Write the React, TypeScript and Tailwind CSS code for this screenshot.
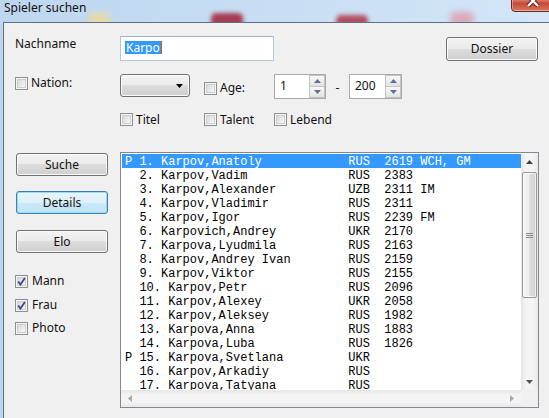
import React from "react";

function Check({ checked = false }: { checked?: boolean }) {
  return (
    <span className="relative flex w-[13px] h-[13px] shrink-0 border border-[#8e8f8f] bg-[#f6f6f6] p-[1px]">
      <span className="flex-1 border border-[#cdcdcd] bg-[linear-gradient(135deg,#d8d8d8,#f8f8f8)]" />
      {checked && (
        <svg className="absolute left-[0px] top-[0px]" width="11" height="11" viewBox="0 0 11 11">
          <path d="M2.3 5.6 L4.4 8.6 L8.9 2" fill="none" stroke="#3a4d8a" strokeWidth="1.8" />
        </svg>
      )}
    </span>
  );
}

function CB({ label, checked, className }: { label: string; checked?: boolean; className: string }) {
  return (
    <div className={className}>
      <Check checked={checked} />
      <span>{label}</span>
    </div>
  );
}

function Btn({ children, focused, className }: { children: React.ReactNode; focused?: boolean; className: string }) {
  return (
    <div className={className}>
      <div
        className={
          focused
            ? "w-full h-full rounded-[3px] border border-[#3c7fb1] bg-[linear-gradient(#e9f5fc_0%,#dff1fb_50%,#cbe9f8_50%,#c0e3f5_100%)] shadow-[inset_0_0_0_1px_#98dcf7] flex items-center justify-center"
            : "w-full h-full rounded-[3px] border border-[#707070] bg-[linear-gradient(#f2f2f2_0%,#ebebeb_50%,#dddddd_50%,#cfcfcf_100%)] shadow-[inset_0_0_0_1px_rgba(255,255,255,0.85)] flex items-center justify-center"
        }
      >
        {children}
      </div>
    </div>
  );
}

function Spinner({ value, className }: { value: string; className: string }) {
  return (
    <div className={className}>
      <div className="w-full h-full border border-[#a9a9a9] bg-white flex">
        <div className="flex-1 pl-[5px] pt-[3px] leading-[16px]">{value}</div>
        <div className="w-[16px] flex flex-col">
          <div className="flex-1 border border-[#c4c4c4] bg-[linear-gradient(#f7f7f7,#e3e3e3)] flex items-center justify-center">
            <svg width="7" height="4" viewBox="0 0 7 4">
              <path d="M0 4 L3.5 0 L7 4 Z" fill="#5b6e96" />
            </svg>
          </div>
          <div className="flex-1 border border-t-0 border-[#c4c4c4] bg-[linear-gradient(#f7f7f7,#e3e3e3)] flex items-center justify-center">
            <svg width="7" height="4" viewBox="0 0 7 4">
              <path d="M0 0 L3.5 4 L7 0 Z" fill="#5b6e96" />
            </svg>
          </div>
        </div>
      </div>
    </div>
  );
}

type Row = [string, number, string, string, string, string];
const rows: Row[] = [
  ["P", 1, "Karpov,Anatoly", "RUS", "2619", "WCH, GM"],
  ["", 2, "Karpov,Vadim", "RUS", "2383", ""],
  ["", 3, "Karpov,Alexander", "UZB", "2311", "IM"],
  ["", 4, "Karpov,Vladimir", "RUS", "2311", ""],
  ["", 5, "Karpov,Igor", "RUS", "2239", "FM"],
  ["", 6, "Karpovich,Andrey", "UKR", "2170", ""],
  ["", 7, "Karpova,Lyudmila", "RUS", "2163", ""],
  ["", 8, "Karpov,Andrey Ivan", "RUS", "2159", ""],
  ["", 9, "Karpov,Viktor", "RUS", "2155", ""],
  ["", 10, "Karpov,Petr", "RUS", "2096", ""],
  ["", 11, "Karpov,Alexey", "UKR", "2058", ""],
  ["", 12, "Karpov,Aleksey", "RUS", "1982", ""],
  ["", 13, "Karpova,Anna", "RUS", "1883", ""],
  ["", 14, "Karpova,Luba", "RUS", "1826", ""],
  ["P", 15, "Karpova,Svetlana", "UKR", "", ""],
  ["", 16, "Karpov,Arkadiy", "RUS", "", ""],
  ["", 17, "Karpova,Tatyana", "RUS", "", ""],
];

function line(r: Row) {
  const [p, n, name, c, elo, t] = r;
  return (p || " ") + " " + `${n}. ${name}`.padEnd(29) + c.padEnd(5) + elo.padEnd(5) + t;
}

export default function App() {
  return (
    <div className="relative w-[549px] h-[418px] overflow-hidden bg-[linear-gradient(90deg,#bed6ef,#c6ddf3_45%,#d4e6f8)] font-['Noto_Sans','Open_Sans',sans-serif] text-[12px] text-[#111]">
      {/* title bar */}
      <div className="relative h-[22px] overflow-hidden pl-[4px] leading-[16px]">
        <div className="absolute left-[88px] top-[13px] w-[22px] h-[14px] rounded-[6px] bg-[#e9d9a6] blur-[3px]" />
        <div className="absolute left-[211px] top-[13px] w-[32px] h-[14px] rounded-[5px] bg-[#a53c52] blur-[2px]" />
        <div className="absolute left-[336px] top-[15px] w-[32px] h-[12px] rounded-[5px] bg-[#b2505f] blur-[2px]" />
        <div className="absolute left-[450px] top-[12px] w-[24px] h-[14px] rounded-[6px] bg-[#dba8b6] blur-[3px]" />
        <span className="relative">Spieler suchen</span>
        <div className="absolute left-[511px] top-[-9px] w-[46px] h-[21px] rounded-[4px] border border-[#6a2a22] bg-[linear-gradient(#e9a79a,#d7705f_45%,#c54a37_60%,#d8785c)] shadow-[inset_0_0_0_1px_rgba(255,255,255,0.35)]">
          <svg className="absolute left-[14px] top-[2px]" width="14" height="14" viewBox="0 0 14 14">
            <path d="M2 2 L12 12 M12 2 L2 12" stroke="#5a1d18" strokeWidth="4.2" />
            <path d="M2 2 L12 12 M12 2 L2 12" stroke="#ffffff" strokeWidth="2.4" />
          </svg>
        </div>
      </div>

      {/* body */}
      <div className="ml-[3px] h-[396px] border-l border-t border-[#5d6f87] bg-[#f0f0f0]">
        {/* row 1 */}
        <div className="flex items-start pt-[13px]">
          <div className="ml-[11px] w-[105px] leading-[16px]">Nachname</div>
          <div className="w-[154px] h-[25px] border border-[#b7c6d9] border-t-[#a2b4ca] bg-white pl-[4px] pt-[4px] flex items-start">
            <span className="bg-[#3399ff] text-white leading-[13px] h-[13px] pl-px pr-[1px]">Karpo</span>
            <span className="w-px h-[13px] bg-[#c45f00]" />
          </div>
          <Btn className="ml-[172px] mt-[1px] w-[92px] h-[24px]">Dossier</Btn>
        </div>

        {/* row 2 */}
        <div className="flex items-start mt-[13px] h-[25px]">
          <CB label="Nation:" className="ml-[11px] w-[105px] mt-[1px] flex items-center gap-[3px] leading-[16px]" />
          <div className="w-[70px] h-[23px] rounded-[3px] border border-[#707070] bg-[linear-gradient(#f2f2f2_0%,#ebebeb_50%,#dddddd_50%,#cfcfcf_100%)] shadow-[inset_0_0_0_1px_rgba(255,255,255,0.85)] flex items-center justify-end pr-[6px]">
            <svg width="7" height="4" viewBox="0 0 7 4">
              <path d="M0 0 L7 0 L3.5 4 Z" fill="#000" />
            </svg>
          </div>
          <CB label="Age:" className="ml-[14px] w-[70px] mt-[6px] flex items-center gap-[3px] leading-[16px]" />
          <Spinner value="1" className="w-[52px] h-[25px]" />
          <div className="w-[23px] mt-[6px] text-center leading-[16px]">-</div>
          <Spinner value="200" className="w-[53px] h-[25px]" />
        </div>

        {/* row 3 */}
        <div className="flex items-start mt-[14px]">
          <CB label="Titel" className="ml-[116px] w-[84px] flex items-center gap-[3px] leading-[13px]" />
          <CB label="Talent" className="w-[70px] flex items-center gap-[3px] leading-[13px]" />
          <CB label="Lebend" className="flex items-center gap-[3px] leading-[13px]" />
        </div>

        {/* main */}
        <div className="flex items-start mt-[26px]">
          <div className="ml-[12px] w-[92px] flex flex-col">
            <Btn className="mt-[1px] h-[23px]">Suche</Btn>
            <Btn focused className="mt-[15px] h-[23px]">Details</Btn>
            <Btn className="mt-[16px] h-[23px]">Elo</Btn>
            <CB label="Mann" checked className="-ml-[1px] mt-[20px] h-[16px] flex items-center gap-[4px]" />
            <CB label="Frau" checked className="-ml-[1px] mt-[8px] h-[16px] flex items-center gap-[4px]" />
            <CB label="Photo" className="-ml-[1px] mt-[7px] h-[16px] flex items-center gap-[4px]" />
          </div>

          <div className="ml-[12px] w-[419px] h-[256px] border border-[#828790] bg-white flex flex-col">
            <div className="flex h-[237px]">
              <div className="flex-1 overflow-hidden pt-[1px] pl-[1px] font-['Liberation_Mono','Courier_New',monospace] text-[12px] text-black">
                {rows.map((r, i) => (
                  <div
                    key={i}
                    className={
                      i === 0
                        ? "h-[14px] leading-[16px] pl-[3px] whitespace-pre bg-[#3399ff] text-white"
                        : "h-[14px] leading-[16px] pl-[3px] whitespace-pre"
                    }
                  >
                    {line(r)}
                  </div>
                ))}
              </div>
              {/* vertical scrollbar */}
              <div className="w-[17px] flex flex-col bg-[linear-gradient(90deg,#e6e6e6,#f4f4f4_30%,#f4f4f4_70%,#e9e9e9)]">
                <div className="h-[17px] flex items-center justify-center">
                  <svg width="7" height="4" viewBox="0 0 7 4">
                    <path d="M0 4 L3.5 0 L7 4 Z" fill="#404040" />
                  </svg>
                </div>
                <div className="mt-[2px] mx-[1px] h-[126px] rounded-[2px] border border-[#979797] bg-[linear-gradient(90deg,#f5f5f5,#ececec_45%,#dcdcdc_55%,#d2d2d2)] shadow-[inset_0_0_0_1px_rgba(255,255,255,0.7)] flex flex-col items-center justify-center gap-[1px]">
                  <span className="w-[7px] h-px bg-[#8a8a8a]" />
                  <span className="w-[7px] h-px bg-[#8a8a8a]" />
                  <span className="w-[7px] h-px bg-[#8a8a8a]" />
                </div>
                <div className="flex-1" />
                <div className="h-[17px] flex items-center justify-center">
                  <svg width="7" height="4" viewBox="0 0 7 4">
                    <path d="M0 0 L7 0 L3.5 4 Z" fill="#555" />
                  </svg>
                </div>
              </div>
            </div>
            {/* horizontal scrollbar */}
            <div className="flex h-[17px]">
              <div className="flex-1 flex items-center justify-between px-[7px] bg-[linear-gradient(#e6e6e6,#f4f4f4_30%,#f4f4f4_70%,#e9e9e9)]">
                <svg width="4" height="7" viewBox="0 0 4 7">
                  <path d="M4 0 L4 7 L0 3.5 Z" fill="#a8a8a8" />
                </svg>
                <svg width="4" height="7" viewBox="0 0 4 7">
                  <path d="M0 0 L0 7 L4 3.5 Z" fill="#a8a8a8" />
                </svg>
              </div>
              <div className="w-[17px] bg-[#f0f0f0]" />
            </div>
          </div>
        </div>
      </div>
    </div>
  );
}
